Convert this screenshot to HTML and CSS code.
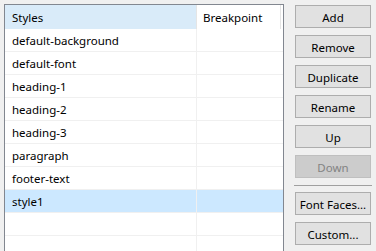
FILE: index.html
```html
<!DOCTYPE html>
<html lang="en">
<head>
    <meta charset="UTF-8">
    <meta name="viewport" content="width=device-width, initial-scale=1.0">
    <title>Styles</title>
    <link rel="stylesheet" href="styles.css">
</head>
<body>
    <div class="dialog">
        <div class="list">
            <div class="row header">
                <div class="cell name hot">Styles</div>
                <div class="cell bp">Breakpoint</div>
            </div>
            <div class="row"><div class="cell name">default-background</div><div class="cell bp"></div></div>
            <div class="row"><div class="cell name">default-font</div><div class="cell bp"></div></div>
            <div class="row"><div class="cell name">heading-1</div><div class="cell bp"></div></div>
            <div class="row"><div class="cell name">heading-2</div><div class="cell bp"></div></div>
            <div class="row"><div class="cell name">heading-3</div><div class="cell bp"></div></div>
            <div class="row"><div class="cell name">paragraph</div><div class="cell bp"></div></div>
            <div class="row"><div class="cell name">footer-text</div><div class="cell bp"></div></div>
            <div class="row selected"><div class="cell name">style1</div><div class="cell bp"></div></div>
            <div class="row"><div class="cell name"></div><div class="cell bp"></div></div>
            <div class="row"><div class="cell name"></div><div class="cell bp"></div></div>
        </div>

        <div class="buttons">
            <button class="btn">Add</button>
            <button class="btn">Remove</button>
            <button class="btn">Duplicate</button>
            <button class="btn">Rename</button>
            <button class="btn">Up</button>
            <button class="btn" disabled>Down</button>
            <div class="separator"></div>
            <button class="btn">Font Faces...</button>
            <button class="btn">Custom...</button>
        </div>
    </div>
</body>
</html>
```

FILE: styles.css
```css
html, body {
    margin: 0;
    padding: 0;
    height: 100%;
    overflow: hidden;
}

body {
    background: #f0f0f0;
    font-family: "Noto Sans", "Open Sans", sans-serif;
    font-size: 11.5px;
    color: #000;
}

.dialog {
    display: flex;
    align-items: flex-start;
    padding: 4px 0 0 4px;
}

/* List view */
.list {
    width: 278px;
    height: 246px;
    overflow: hidden;
    background: white;
    border: 1px solid #828790;
    border-bottom: none;
}

.row {
    display: flex;
    height: 22px;
    border-bottom: 1px solid #f0f0f0;
}

.row.header {
    height: 24px;
    border-bottom: none;
}

.row.selected {
    background: #cce8ff;
}

.cell {
    display: flex;
    align-items: center;
    padding-top: 1px;
    box-sizing: border-box;
    white-space: nowrap;
}

.cell.name {
    width: 192px;
    padding-left: 7px;
    border-right: 1px solid #f0f0f0;
}

.cell.bp {
    width: 84px;
    padding-left: 6px;
}

.header .cell.name {
    border-right: 1px solid #e5e5e5;
}

.header .cell.bp {
    border-right: 1px solid #e5e5e5;
}

.cell.hot {
    background: #d9ebf9;
}

/* Buttons */
.buttons {
    display: flex;
    flex-direction: column;
    gap: 7px;
    margin-left: 11px;
    padding-top: 1px;
    width: 76px;
}

.btn {
    height: 23px;
    margin: 0;
    padding: 1px 0 0;
    background: #e1e1e1;
    border: 1px solid #adadad;
    font-family: inherit;
    font-size: 11.5px;
    color: #000;
}

.btn:disabled {
    background: #cccccc;
    border-color: #bfbfbf;
    color: #838383;
}

.separator {
    margin: 0 -1px -1px;
    border-top: 1px solid #a0a0a0;
}
```
